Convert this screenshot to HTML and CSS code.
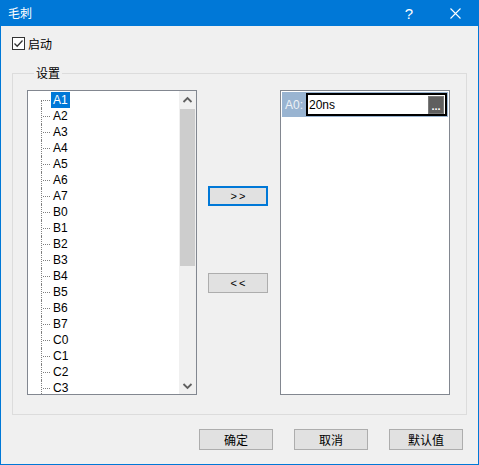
FILE: index.html
```html
<!DOCTYPE html>
<html lang="zh">
<head>
<meta charset="utf-8">
<title>毛刺</title>
<link rel="stylesheet" href="styles.css">
</head>
<body>
<div class="window">
  <div class="titlebar">
    <span class="title">毛刺</span>
    <div class="tb-btns">
      <span class="tb-btn help">?</span>
      <span class="tb-btn close">
        <svg width="11" height="11" viewBox="0 0 11 11"><path d="M0.5 0.5 L10.5 10.5 M10.5 0.5 L0.5 10.5" stroke="#fff" stroke-width="1.1" fill="none"/></svg>
      </span>
    </div>
  </div>
  <div class="content">
    <label class="check">
      <span class="box"><svg width="11" height="11" viewBox="0 0 11 11"><path d="M1.5 5.5 L4.2 8.2 L9.5 2.5" stroke="#333" stroke-width="1.3" fill="none"/></svg></span>
      <span class="check-label">启动</span>
    </label>
    <fieldset class="group">
      <legend>设置</legend>
      <div class="columns">
        <div class="listbox">
          <ul class="tree">
            <li class="item first"><span class="twig"></span><span class="name selected">A1</span></li>
            <li class="item"><span class="twig"></span><span class="name">A2</span></li>
            <li class="item"><span class="twig"></span><span class="name">A3</span></li>
            <li class="item"><span class="twig"></span><span class="name">A4</span></li>
            <li class="item"><span class="twig"></span><span class="name">A5</span></li>
            <li class="item"><span class="twig"></span><span class="name">A6</span></li>
            <li class="item"><span class="twig"></span><span class="name">A7</span></li>
            <li class="item"><span class="twig"></span><span class="name">B0</span></li>
            <li class="item"><span class="twig"></span><span class="name">B1</span></li>
            <li class="item"><span class="twig"></span><span class="name">B2</span></li>
            <li class="item"><span class="twig"></span><span class="name">B3</span></li>
            <li class="item"><span class="twig"></span><span class="name">B4</span></li>
            <li class="item"><span class="twig"></span><span class="name">B5</span></li>
            <li class="item"><span class="twig"></span><span class="name">B6</span></li>
            <li class="item"><span class="twig"></span><span class="name">B7</span></li>
            <li class="item"><span class="twig"></span><span class="name">C0</span></li>
            <li class="item"><span class="twig"></span><span class="name">C1</span></li>
            <li class="item"><span class="twig"></span><span class="name">C2</span></li>
            <li class="item"><span class="twig"></span><span class="name">C3</span></li>
          </ul>
          <div class="vscroll">
            <div class="sb-arrow"><svg width="17" height="17" viewBox="0 0 17 17"><path d="M4.5 11 L8.5 7 L12.5 11" stroke="#606060" stroke-width="1.8" fill="none"/></svg></div>
            <div class="sb-track"><div class="sb-thumb"></div></div>
            <div class="sb-arrow"><svg width="17" height="17" viewBox="0 0 17 17"><path d="M4.5 7 L8.5 11 L12.5 7" stroke="#606060" stroke-width="1.8" fill="none"/></svg></div>
          </div>
        </div>
        <div class="movers">
          <button class="btn mover focused">&gt;&gt;</button>
          <button class="btn mover">&lt;&lt;</button>
        </div>
        <div class="panel">
          <div class="param">
            <span class="plabel">A0:</span>
            <div class="pinput"><span class="pvalue">20ns</span><span class="dots">...</span></div>
          </div>
        </div>
      </div>
    </fieldset>
    <div class="footer">
      <button class="btn action">确定</button>
      <button class="btn action">取消</button>
      <button class="btn action">默认值</button>
    </div>
  </div>
</div>
</body>
</html>
```
FILE: styles.css
```css
* { box-sizing: border-box; }
html, body { margin: 0; padding: 0; }
body {
  width: 479px;
  height: 465px;
  background: #f0f0f0;
  font-family: "Liberation Sans", "Noto Sans CJK SC", sans-serif;
  font-size: 12px;
  color: #000;
}
.window {
  width: 479px;
  height: 465px;
  border: 1px solid #0078d7;
  border-top: 0;
  background: #f0f0f0;
  display: flex;
  flex-direction: column;
}
.titlebar {
  height: 26px;
  margin: 0 -1px;
  background: #0078d7;
  display: flex;
  align-items: center;
  color: #fff;
}
.title {
  padding-left: 8px;
  font-family: "Noto Sans CJK SC", sans-serif;
  font-size: 12px;
  line-height: 16px;
  margin-top: -1px;
}
.tb-btns {
  margin-left: auto;
  display: flex;
  height: 26px;
}
.tb-btn {
  width: 46px;
  height: 26px;
  display: flex;
  align-items: center;
  justify-content: center;
}
.help {
  font-family: "Liberation Sans", sans-serif;
  font-size: 15px;
  padding-right: 2px;
}
.close { padding-right: 1px; }
.content {
  padding: 0 11px;
  display: flex;
  flex-direction: column;
}
.check {
  margin-top: 11px;
  height: 13px;
  display: flex;
  align-items: center;
}
.box {
  width: 13px;
  height: 13px;
  border: 1px solid #333;
  background: #fff;
  display: flex;
  align-items: center;
  justify-content: center;
}
.check-label {
  margin-left: 3px;
  font-family: "Noto Sans CJK SC", sans-serif;
  font-size: 12px;
  line-height: 13px;
}
.group {
  margin: 15px 0 0 0;
  padding: 9px 16px 19px 14px;
  border: 1px solid #dcdcdc;
  min-width: 0;
  width: 455px;
}
.group legend {
  margin-left: 7px;
  padding: 0 2px;
  font-family: "Noto Sans CJK SC", sans-serif;
  font-size: 12px;
  line-height: 16px;
  height: 16px;
}
.columns {
  display: flex;
  height: 305px;
}
.listbox {
  width: 170px;
  height: 305px;
  border: 1px solid #828790;
  background: #fff;
  display: flex;
  margin-right: 11px;
}
.tree {
  list-style: none;
  margin: 0;
  padding: 1px 0 0 0;
  flex: 1;
  overflow: hidden;
}
.item {
  height: 16px;
  display: flex;
  align-items: center;
}
.twig {
  position: relative;
  width: 10px;
  height: 16px;
  margin-left: 13px;
}
.twig::before {
  content: "";
  position: absolute;
  left: 0;
  top: 0;
  bottom: 0;
  border-left: 1px dotted #808080;
}
.first .twig::before { top: 8px; }
.twig::after {
  content: "";
  position: absolute;
  left: 2px;
  top: 8px;
  width: 7px;
  border-top: 1px dotted #808080;
}
.name {
  padding: 0 2px;
  height: 16px;
  line-height: 16px;
}
.selected {
  background: #0078d7;
  color: #fff;
}
.vscroll {
  width: 17px;
  background: #f0f0f0;
  display: flex;
  flex-direction: column;
}
.sb-arrow {
  width: 17px;
  height: 17px;
  display: flex;
}
.sb-track {
  flex: 1;
  padding: 1px 1px 0 1px;
}
.sb-thumb {
  height: 157px;
  background: #cdcdcd;
}
.movers {
  width: 60px;
  margin-right: 12px;
  padding-top: 96px;
  display: flex;
  flex-direction: column;
  gap: 67px;
}
.btn {
  background: #e1e1e1;
  border: 1px solid #adadad;
  color: #000;
  padding: 0;
  margin: 0;
  font-family: "Liberation Sans", "Noto Sans CJK SC", sans-serif;
  font-size: 12px;
}
.mover {
  width: 60px;
  height: 20px;
  font-family: "Liberation Sans", sans-serif;
  font-size: 11px;
  letter-spacing: 2px;
  padding-left: 2px;
}
.focused {
  border: 2px solid #0078d7;
}
.panel {
  width: 170px;
  height: 305px;
  border: 1px solid #828790;
  background: #fff;
  padding: 1px;
}
.param {
  height: 25px;
  background: #99b4d1;
  display: flex;
  align-items: center;
}
.plabel {
  width: 24px;
  padding-left: 3px;
  color: #eef2f7;
  font-size: 12px;
}
.pinput {
  flex: 1;
  height: 23px;
  border: 2px solid #000;
  background: #fff;
  display: flex;
  align-items: center;
  margin-right: 1px;
}
.pvalue {
  padding-left: 1px;
  font-size: 12px;
}
.dots {
  margin-left: auto;
  margin-right: 1px;
  width: 16px;
  height: 18px;
  background: #5f5f5f;
  border: 1px solid #7a7a7a;
  color: #fff;
  font-size: 11px;
  line-height: 19px;
  text-align: center;
  font-weight: bold;
  overflow: hidden;
}
.footer {
  margin-top: 14px;
  display: flex;
  justify-content: flex-end;
  gap: 21px;
  padding-right: 4px;
}
.action {
  width: 74px;
  height: 21px;
  font-family: "Noto Sans CJK SC", sans-serif;
  font-size: 12px;
  line-height: 16px;
}
```
